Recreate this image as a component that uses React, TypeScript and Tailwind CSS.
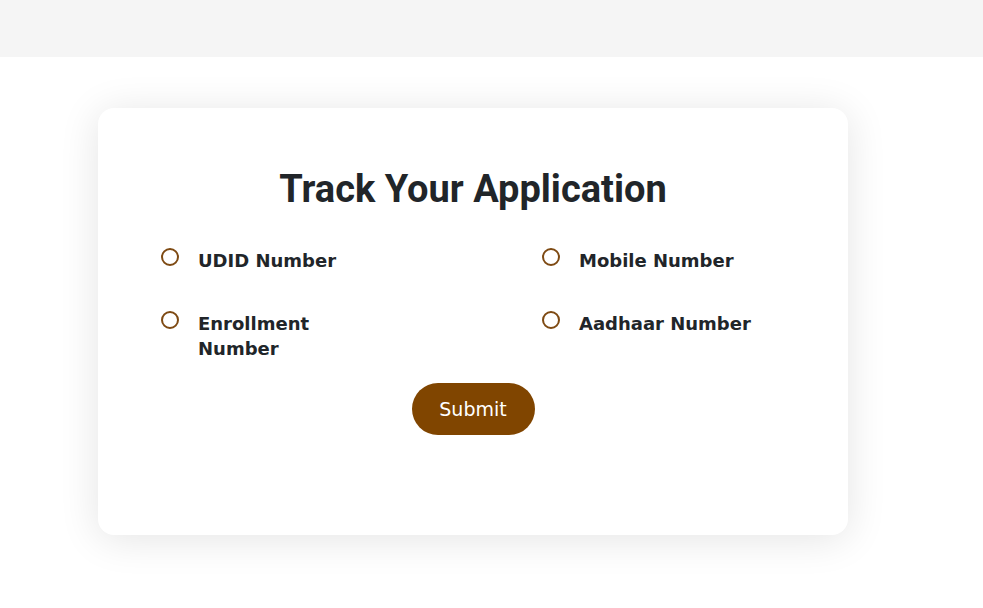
const options = [
  { id: "udid", label: "UDID Number" },
  { id: "mobile", label: "Mobile Number" },
  { id: "enroll", label: "Enrollment Number" },
  { id: "aadhaar", label: "Aadhaar Number" },
];

export default function App() {
  return (
    <div className="min-h-[608px] bg-white">
      <div className="h-[57px] bg-[#f5f5f5]" />

      <div className="ml-[98px] mt-[51px] w-[750px] h-[427px] rounded-2xl bg-white shadow-[0_4px_40px_rgba(0,0,0,0.11)] pt-[59px]">
        <h2 className="text-center text-[38px] leading-[45px] font-bold text-[#212529] [font-family:Roboto,sans-serif]">
          Track Your Application
        </h2>

        <div className="mt-[36px] pl-[63px] grid grid-cols-[381px_1fr] gap-y-[38px]">
          {options.map((o) => (
            <label key={o.id} className="flex items-start gap-[19px] cursor-pointer">
              <span className="w-[18px] h-[18px] shrink-0 rounded-full border-2 border-[#7e4a13] bg-white" />
              <span className="w-[180px] text-[18px] leading-[25px] font-bold text-[#212529] [font-family:'DejaVu_Sans',sans-serif]">
                {o.label}
              </span>
            </label>
          ))}
        </div>

        <div className="mt-[22px] flex justify-center">
          <button className="w-[123px] h-[52px] rounded-full bg-[#804500] text-white text-[19px] [font-family:'DejaVu_Sans',sans-serif]">
            Submit
          </button>
        </div>
      </div>
    </div>
  );
}
